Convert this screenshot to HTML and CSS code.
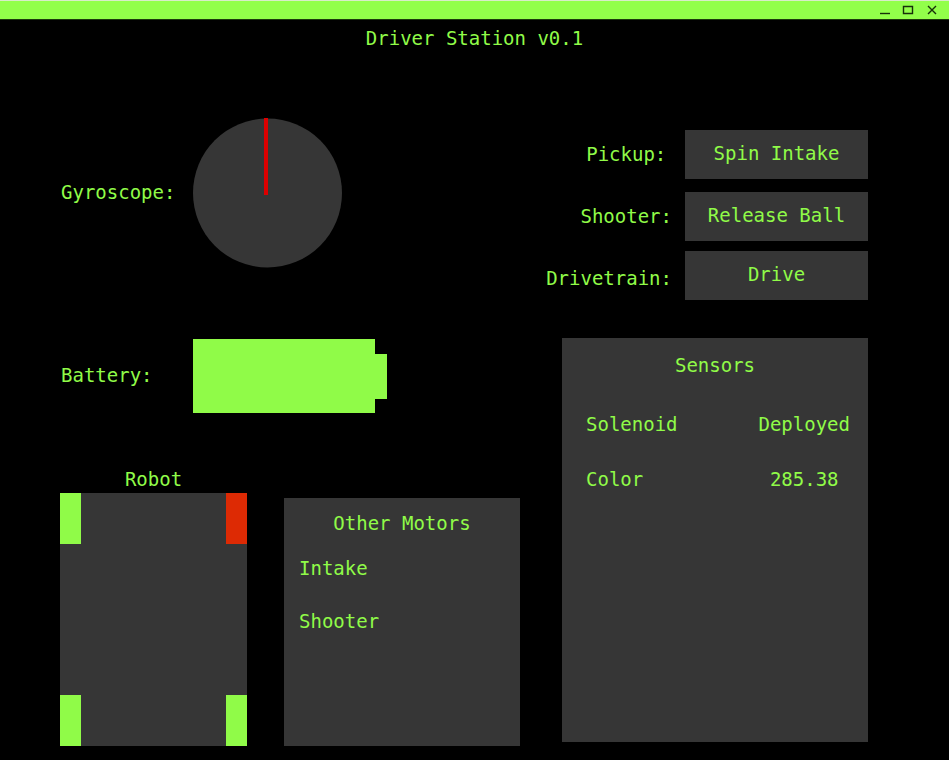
FILE: index.html
```html
<!DOCTYPE html>
<html lang="en">
<head>
<meta charset="utf-8">
<title>Driver Station v0.1</title>
<link rel="stylesheet" href="styles.css">
</head>
<body>
<header class="titlebar">
  <button class="window-button" aria-label="Minimize"><svg viewBox="0 0 12 12"><path d="M2 9.5H12"/></svg></button>
  <button class="window-button" aria-label="Maximize"><svg viewBox="0 0 12 12"><path d="M1.5 2.5H10.5V9.5H1.5Z"/></svg></button>
  <button class="window-button" aria-label="Close"><svg viewBox="0 0 12 12"><path d="M2 2L10 10M10 2L2 10"/></svg></button>
</header>
<h1 class="title">Driver Station v0.1</h1>
<main class="dashboard">
  <div class="status">
    <section class="reading gyro">
      <h2 class="reading-label">Gyroscope:</h2>
      <svg class="gyro-dial" viewBox="0 0 150 150" role="img" aria-label="Heading 0 degrees">
        <circle class="dial-face" cx="74.5" cy="75" r="74.5"/>
        <path class="dial-needle" d="M73 0V77"/>
      </svg>
    </section>
    <section class="reading">
      <h2 class="reading-label">Battery:</h2>
      <div class="battery" role="img" aria-label="Battery full">
        <div class="battery-body"></div>
        <div class="battery-tip"></div>
      </div>
    </section>
    <div class="machine">
      <section class="robot">
        <h2 class="robot-title">Robot</h2>
        <div class="chassis">
          <div class="wheel"></div>
          <div class="wheel wheel-fault"></div>
          <div class="wheel"></div>
          <div class="wheel"></div>
        </div>
      </section>
      <section class="panel motors">
        <h2 class="panel-title">Other Motors</h2>
        <ul class="motor-list">
          <li>Intake</li>
          <li>Shooter</li>
        </ul>
      </section>
    </div>
  </div>
  <div class="side">
    <section class="controls">
      <div class="control-labels">
        <label class="control-label" for="pickup">Pickup:</label>
        <label class="control-label" for="shooter">Shooter:</label>
        <label class="control-label" for="drivetrain">Drivetrain:</label>
      </div>
      <div class="control-buttons">
        <button class="control-button" id="pickup">Spin Intake</button>
        <button class="control-button" id="shooter">Release Ball</button>
        <button class="control-button" id="drivetrain">Drive</button>
      </div>
    </section>
    <section class="panel sensors">
      <h2 class="panel-title">Sensors</h2>
      <table class="sensor-table">
        <tr><th scope="row">Solenoid</th><td>Deployed</td></tr>
        <tr><th scope="row">Color</th><td>285.38</td></tr>
      </table>
    </section>
  </div>
</main>
</body>
</html>
```
FILE: styles.css
```css
:root {
  --green: #90fb48;
  --panel: #363636;
}

* {
  box-sizing: border-box;
}

body {
  margin: 0;
  min-height: 100vh;
  display: flex;
  flex-direction: column;
  background: #000;
  color: var(--green);
  font: 19px/24px "DejaVu Sans Mono", monospace;
}

h1, h2, ul {
  margin: 0;
  padding: 0;
  font: inherit;
}

button {
  border: 0;
  padding: 0;
  font: inherit;
  color: inherit;
}

.titlebar {
  display: flex;
  justify-content: flex-end;
  align-items: center;
  gap: 12px;
  height: 20px;
  padding-right: 11px;
  background: #92ff4a;
  border-top: 1px solid #d8ecc8;
  border-bottom: 1px solid #1c3a0c;
}

.window-button {
  width: 12px;
  height: 12px;
  background: none;
}

.window-button svg {
  display: block;
  fill: none;
  stroke: #17300a;
  stroke-width: 1.4;
}

.title {
  padding-top: 6px;
  text-align: center;
}

.dashboard {
  flex: 1;
  display: grid;
  grid-template-columns: 460fr 324fr;
  gap: 24px;
  padding: 68px 81px 14px 60px;
}

.status,
.side {
  display: flex;
  flex-direction: column;
}

.reading {
  display: flex;
  align-items: center;
}

.reading-label {
  width: 133px;
  padding: 0 0 3px 1px;
}

.gyro {
  margin-bottom: 71px;
}

.gyro-dial {
  width: 150px;
  height: 150px;
}

.dial-face {
  fill: var(--panel);
}

.dial-needle {
  stroke: #dd0000;
  stroke-width: 4;
}

.battery {
  display: flex;
  align-items: center;
}

.battery-body {
  width: 182px;
  height: 74px;
  background: var(--green);
}

.battery-tip {
  width: 12px;
  height: 45px;
  background: var(--green);
}

.machine {
  flex: 1;
  display: grid;
  grid-template-columns: 187fr 236fr;
  gap: 37px;
  padding-top: 54px;
}

.robot {
  display: flex;
  flex-direction: column;
}

.robot-title {
  text-align: center;
}

.chassis {
  flex: 1;
  min-height: 120px;
  margin-top: 2px;
  display: grid;
  grid-template-columns: 21px 21px;
  grid-template-rows: 51px 51px;
  justify-content: space-between;
  align-content: space-between;
  background: var(--panel);
}

.wheel {
  background: var(--green);
}

.wheel-fault {
  background: #dd2a04;
}

.panel {
  background: var(--panel);
}

.panel-title {
  text-align: center;
}

.motors {
  margin-top: 31px;
  padding: 13px 15px;
}

.motor-list {
  list-style: none;
  display: grid;
  gap: 29px;
  padding-top: 21px;
}

.controls {
  display: flex;
  justify-content: flex-end;
  gap: 13px;
  padding-top: 5px;
}

.control-labels {
  display: flex;
  flex-direction: column;
  align-items: flex-end;
}

.control-label {
  min-width: 8ch;
  line-height: 62px;
  text-align: center;
}

.control-buttons {
  flex: 0 1 183px;
  display: grid;
  grid-template-rows: 62px 59px 49px;
  align-items: start;
  padding-top: 7px;
}

.control-button {
  height: 49px;
  padding-bottom: 3px;
  background: var(--panel);
}

.sensors {
  flex: 1;
  margin: 29px 0 4px 18px;
  padding: 15px 18px;
}

.sensor-table {
  width: 100%;
  margin-top: 19px;
  border-collapse: collapse;
}

.sensor-table th,
.sensor-table td {
  height: 55px;
  padding: 0;
  font-weight: normal;
  text-align: left;
}

.sensor-table th {
  padding-left: 6px;
}

.sensor-table td {
  width: 8ch;
  text-align: center;
}
```
